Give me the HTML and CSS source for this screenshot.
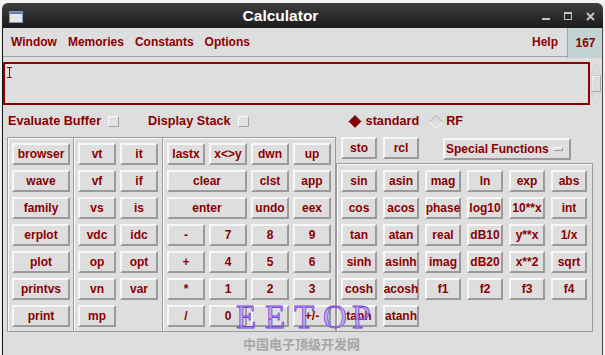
FILE: index.html
```html
<!DOCTYPE html>
<html>
	<head>
		<meta charset="UTF-8">
		<meta name="viewport" content="width=device-width, initial-scale=1.0">
		<title>Calculator</title>
		<link rel="stylesheet" href="styles.css">
	</head>
	<body>
		<div class="desk"></div>
		<div class="window">
			<div class="titlebar">
				<svg class="winicon" width="14" height="12" viewBox="0 0 14 12">
					<rect x="0.5" y="0.5" width="13" height="11" fill="#e6e6e6" stroke="#7f9cc8"/>
					<rect x="1" y="1" width="12" height="2" fill="#5b7fbf"/>
				</svg>
				<div class="title">Calculator</div>
				<div class="controls">
					<svg width="9" height="9" viewBox="0 0 9 9"><rect x="0" y="6" width="8" height="2" fill="#c4c4c4"/></svg>
					<svg width="9" height="9" viewBox="0 0 9 9"><rect x="0.5" y="0.5" width="7" height="7" fill="none" stroke="#c4c4c4"/><rect x="0" y="0" width="8" height="2" fill="#c4c4c4"/></svg>
					<svg width="9" height="9" viewBox="0 0 9 9"><path d="M1 1 L8 8 M8 1 L1 8" stroke="#c4c4c4" stroke-width="2"/></svg>
				</div>
			</div>
			<div class="body">
				<div class="menubar">
					<div class="menuleft">
						<ul class="menus">
							<li>Window</li>
							<li>Memories</li>
							<li>Constants</li>
							<li>Options</li>
						</ul>
						<div class="help">Help</div>
					</div>
					<div class="count">167</div>
				</div>

				<div class="entry">
					<div class="buffer">
						<svg class="caret" width="5" height="11" viewBox="0 0 5 11"><path d="M0 0.5 H5 M2.5 0.5 V10.5 M0 10.5 H5" stroke="#8b0000" stroke-width="1"/></svg>
					</div>
					<svg class="scroll" width="12" height="43" viewBox="0 0 12 43">
						<path d="M6 1.5 L10.5 11.5 L1.5 11.5 Z" fill="none" stroke="#c8c8c8" stroke-dasharray="1 1"/>
						<rect x="1.5" y="13.5" width="9" height="16" fill="#dedede" stroke="#a6a6a6"/>
						<path d="M1.5 14 H10 M2 14 V29" stroke="#fafafa"/>
						<path d="M1.5 31.5 L10.5 31.5 L6 41.5 Z" fill="none" stroke="#c8c8c8" stroke-dasharray="1 1"/>
					</svg>
				</div>

				<div class="opts">
					<span class="opt">Evaluate Buffer</span><span class="check"></span>
					<span class="opt second">Display Stack</span><span class="check"></span>
					<svg class="radio" width="14" height="14" viewBox="0 0 14 14">
						<polygon points="7,0.5 13.5,7 7,13.5 0.5,7" fill="#8b0000"/>
						<polyline points="0.5,7 7,0.5 13.5,7" fill="none" stroke="#3a3a3a"/>
						<polyline points="0.5,7 7,13.5 13.5,7" fill="none" stroke="#ffffff"/>
					</svg>
					<span class="opt">standard</span>
					<svg class="radio rf" width="14" height="14" viewBox="0 0 14 14">
						<polyline points="0.5,7 7,0.5 13.5,7" fill="none" stroke="#a8a8a8"/>
						<polyline points="0.5,7 7,13.5 13.5,7" fill="none" stroke="#ffffff"/>
					</svg>
					<span class="opt">RF</span>
				</div>

				<div class="keys">
					<div class="frame fa">
						<div class="btn">browser</div>
						<div class="btn">wave</div>
						<div class="btn">family</div>
						<div class="btn">erplot</div>
						<div class="btn">plot</div>
						<div class="btn">printvs</div>
						<div class="btn">print</div>
					</div>
					<div class="frame fb">
						<div class="btn">vt</div><div class="btn">it</div>
						<div class="btn">vf</div><div class="btn">if</div>
						<div class="btn">vs</div><div class="btn">is</div>
						<div class="btn">vdc</div><div class="btn">idc</div>
						<div class="btn">op</div><div class="btn">opt</div>
						<div class="btn">vn</div><div class="btn">var</div>
						<div class="btn">mp</div>
					</div>
					<div class="frame fc">
						<div class="btn">lastx</div><div class="btn">x&lt;&gt;y</div><div class="btn">dwn</div><div class="btn">up</div>
						<div class="btn wide">clear</div><div class="btn">clst</div><div class="btn">app</div>
						<div class="btn wide">enter</div><div class="btn">undo</div><div class="btn">eex</div>
						<div class="btn">-</div><div class="btn">7</div><div class="btn">8</div><div class="btn">9</div>
						<div class="btn">+</div><div class="btn">4</div><div class="btn">5</div><div class="btn">6</div>
						<div class="btn">*</div><div class="btn">1</div><div class="btn">2</div><div class="btn">3</div>
						<div class="btn">/</div><div class="btn">0</div><div class="btn">.</div><div class="btn">+/-</div>
					</div>
					<div class="side">
						<div class="siderow">
							<div class="btn sbtn">sto</div>
							<div class="btn sbtn">rcl</div>
							<div class="btn special">Special Functions<span class="ind"></span></div>
						</div>
						<div class="frame fd">
							<div class="btn">sin</div><div class="btn">asin</div><div class="btn">mag</div><div class="btn">ln</div><div class="btn">exp</div><div class="btn">abs</div>
							<div class="btn">cos</div><div class="btn">acos</div><div class="btn">phase</div><div class="btn">log10</div><div class="btn">10**x</div><div class="btn">int</div>
							<div class="btn">tan</div><div class="btn">atan</div><div class="btn">real</div><div class="btn">dB10</div><div class="btn">y**x</div><div class="btn">1/x</div>
							<div class="btn">sinh</div><div class="btn">asinh</div><div class="btn">imag</div><div class="btn">dB20</div><div class="btn">x**2</div><div class="btn">sqrt</div>
							<div class="btn">cosh</div><div class="btn">acosh</div><div class="btn">f1</div><div class="btn">f2</div><div class="btn">f3</div><div class="btn">f4</div>
							<div class="btn">tanh</div><div class="btn">atanh</div>
						</div>
					</div>
				</div>
			</div>
		</div>

		<div class="mark">
			<div class="letters"><span>E</span><span>E</span><span>T</span><span>O</span><span>P</span></div>
			<div class="site">中国电子顶级开发网</div>
		</div>
	</body>
</html>
```

FILE: styles.css
```css
body {
	margin: 0;
	height: 355px;
	overflow: hidden;
	background-color: #efefef;
	font-family: "Liberation Sans", Arial, sans-serif;
	font-weight: bold;
	font-size: 12px;
	color: #8b0000;
}

.desk {
	height: 3px;
	background-color: #f4f4f4;
}

.window {
	margin-left: 2px;
	width: 601px;
}

.titlebar {
	height: 25px;
	display: flex;
	align-items: center;
	background: linear-gradient(#3e3e3e, #1c1c1c);
	border-radius: 6px 6px 0 0;
	color: #ffffff;
}

.winicon {
	margin-left: 7px;
	margin-top: 2px;
}

.title {
	flex: 1;
	text-align: center;
	font-size: 15.5px;
	padding-right: 4px;
}

.controls {
	display: flex;
	gap: 13px;
	padding-right: 8px;
	margin-top: 1px;
}

.body {
	height: 327px;
	background-color: #dedede;
	border-left: 1px solid #111111;
	border-right: 1px solid #4a4a4a;
}

/* 菜单栏 */
.menubar {
	display: flex;
	height: 30px;
}

.menuleft {
	flex: 1;
	display: flex;
	align-items: center;
	height: 29px;
	box-sizing: border-box;
	border-bottom: 1px solid #a4a4a4;
}

.menus {
	list-style: none;
	margin: 0;
	padding: 0 0 0 8px;
	display: flex;
	gap: 11px;
	flex: 1;
}

.help {
	margin-right: 9px;
}

.count {
	width: 33px;
	display: flex;
	justify-content: center;
	align-items: center;
	background-color: #c3d3d3;
	border-left: 1px solid #a4a4a4;
	padding-left: 1px;
}

/* 输入区 */
.entry {
	display: flex;
	margin-top: 4px;
	height: 43px;
}

.buffer {
	width: 587px;
	box-sizing: border-box;
	border: 2px solid #8b0000;
	padding: 3px 0 0 2px;
}

.caret {
	display: block;
}

.opts {
	height: 32px;
	display: flex;
	align-items: center;
	padding-left: 5px;
	font-size: 12.7px;
}

.check {
	width: 11px;
	height: 11px;
	box-sizing: border-box;
	margin-left: 7px;
	margin-top: 1px;
	border: 1px solid;
	border-color: #fafafa #a2a2a2 #a2a2a2 #fafafa;
	background-color: #e2e2e2;
}

.second {
	margin-left: 29px;
}

.radio {
	margin-left: 99px;
	margin-right: 4px;
	margin-top: 2px;
}

.radio.rf {
	margin-left: 10px;
	margin-right: 3px;
}

/* 按键 */
.keys {
	display: flex;
	padding-left: 4px;
}

.frame {
	box-sizing: border-box;
	border: 1px solid #9c9c9c;
	box-shadow: inset 1px 1px 0 #fafafa;
	display: grid;
	grid-auto-rows: 22px;
	row-gap: 5px;
	align-content: start;
}

.fa {
	width: 67px;
	height: 195px;
	padding: 5px 3px 4px 4px;
	grid-template-columns: 58px;
}

.fb {
	width: 89px;
	height: 195px;
	border-left: none;
	padding: 5px 4px 4px 4px;
	grid-template-columns: repeat(2, 38px);
	column-gap: 4px;
}

.fc {
	width: 173px;
	height: 195px;
	border-left: none;
	padding: 5px 4px 4px 4px;
	grid-template-columns: repeat(4, 38px);
	column-gap: 4px;
}

.fc .wide {
	grid-column: span 2;
}

.side {
	display: flex;
	flex-direction: column;
}

.siderow {
	display: flex;
	height: 22px;
	padding-left: 5px;
	gap: 6px;
}

.sbtn {
	width: 36px;
}

.special {
	width: 128px;
	height: 20px;
	margin-top: 1px;
	margin-left: 18px;
	justify-content: flex-start;
	padding-left: 1px;
}

.ind {
	width: 10px;
	height: 4px;
	box-sizing: border-box;
	margin-left: auto;
	margin-right: 6px;
	border: 1px solid;
	border-color: #fafafa #9a9a9a #9a9a9a #fafafa;
}

.fd {
	margin-top: 4px;
	width: 257px;
	height: 169px;
	padding: 6px 5px 4px 4px;
	grid-template-columns: repeat(6, 36px);
	column-gap: 6px;
}

.btn {
	height: 22px;
	box-sizing: border-box;
	border: 2px solid;
	border-color: #f7f7f7 #9a9a9a #9a9a9a #f7f7f7;
	background-color: #dedede;
	display: flex;
	justify-content: center;
	align-items: center;
	white-space: nowrap;
	font-size: 12px;
}

/* 水印 */
.mark {
	position: absolute;
	left: 236px;
	top: 301px;
}

.letters {
	display: flex;
	font-family: "Liberation Serif", "Times New Roman", serif;
	font-weight: normal;
	font-size: 33px;
	line-height: 33px;
	color: rgba(170, 140, 240, 0.6);
	-webkit-text-stroke: 0.8px #7a3fe0;
}

.letters span {
	width: 29px;
}

.site {
	margin-top: 2px;
	margin-left: 7px;
	font-family: "Noto Sans CJK SC", sans-serif;
	font-size: 13px;
	line-height: 16px;
	color: #a6a6a6;
}
```
